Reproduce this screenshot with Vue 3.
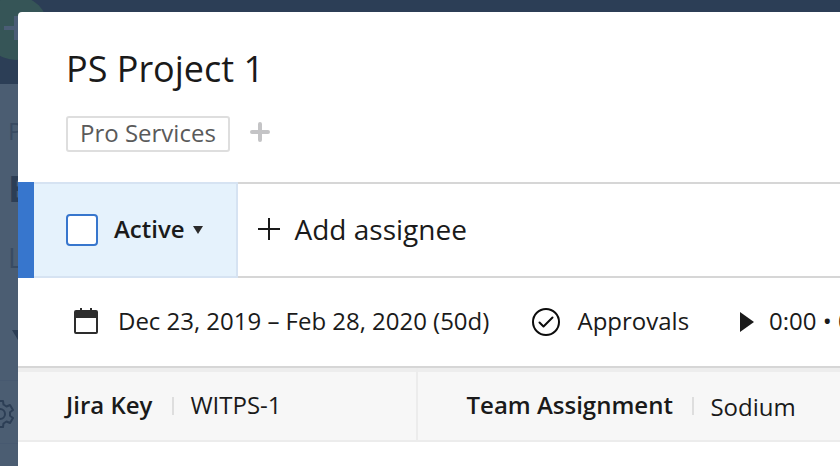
<script setup>
const fields = [
  { label: 'Jira Key', value: 'WITPS-1', kind: 'key' },
  { label: 'Team Assignment', value: 'Sodium', kind: 'team' },
]
</script>

<template>
  <div class="screen">
    <div class="backdrop">
      <div class="topbar">
        <svg class="create" width="64" height="64" viewBox="0 0 64 64">
          <circle cx="32" cy="32" r="32" fill="#365557" />
          <path d="M20 30h24v4H20zM30 20h4v24h-4z" fill="#4b5d76" />
        </svg>
      </div>
      <div class="side">
        <span class="side-small">P</span>
        <span class="side-bold">E</span>
        <span class="side-list">L</span>
        <svg class="side-caret" width="12" height="10" viewBox="0 0 12 10"><path d="M0 0h12L6 10z" fill="#2c3e55" /></svg>
        <div class="side-gear">
          <svg width="30" height="30" viewBox="-15 -15 30 30" fill="none" stroke="#2c3e55" stroke-width="2" stroke-linejoin="round">
            <path d="M-3 -13H3L3.500 -9.500L6.500 -7.500L10 -9L13 -4L10 -1.800V1.800L13 4L10 9L6.500 7.500L3.500 9.500L3 13H-3L-3.500 9.500L-6.500 7.500L-10 9L-13 4L-10 1.800V-1.800L-13 -4L-10 -9L-6.500 -7.500L-3.500 -9.500Z" />
            <circle r="5" />
          </svg>
        </div>
      </div>
    </div>

    <main class="dialog">
      <header class="head">
        <h1 class="title">PS Project 1</h1>
        <div class="tags">
          <span class="tag">Pro Services</span>
          <svg class="tag-add" width="20" height="20" viewBox="0 0 20 20">
            <path d="M10 2v16M2 10h16" stroke="#c4c4c6" stroke-width="4" stroke-linecap="round" />
          </svg>
        </div>
      </header>

      <section class="status-row">
        <div class="accent"></div>
        <div class="status">
          <span class="checkbox"></span>
          <span class="status-name">Active</span>
          <svg class="caret" width="10" height="8" viewBox="0 0 10 8"><path d="M0 0h10L5 8z" fill="#2b2b2b" /></svg>
        </div>
        <div class="assign">
          <svg class="assign-plus" width="22" height="22" viewBox="0 0 22 22"><path d="M11 0v22M0 11h22" stroke="#1a1a1a" stroke-width="2" /></svg>
          <span class="assign-text">Add assignee</span>
        </div>
      </section>

      <section class="meta">
        <svg class="calendar" width="24" height="26" viewBox="0 0 24 26">
          <path d="M6 0h2v2h8V0h2v2h4a2 2 0 0 1 2 2v20a2 2 0 0 1-2 2H2a2 2 0 0 1-2-2V4a2 2 0 0 1 2-2h4zM2 10v14h20V10z" fill="#2d2d2d" fill-rule="evenodd" />
        </svg>
        <span class="dates">Dec 23, 2019 – Feb 28, 2020 (50d)</span>
        <svg class="approve" width="28" height="28" viewBox="0 0 28 28" fill="none" stroke="#0c0c0c" stroke-width="2">
          <circle cx="14" cy="14" r="13" />
          <path d="M7.500 14.500l4 4L20.500 9.500" stroke-linecap="round" stroke-linejoin="round" />
        </svg>
        <span class="approvals">Approvals</span>
        <svg class="play" width="14" height="20" viewBox="0 0 14 20"><path d="M0 0l14 10L0 20z" fill="#1a1a1a" /></svg>
        <span class="timer">0:00 • 0</span>
      </section>

      <section class="fields">
        <div v-for="f in fields" :key="f.kind" class="field" :class="f.kind">
          <span class="label">{{ f.label }}</span>
          <span class="sep"></span>
          <span class="value">{{ f.value }}</span>
        </div>
      </section>
    </main>
  </div>
</template>

<style>
body { overflow: hidden; }
</style>

<style scoped>
.screen {
  position: relative;
  width: 840px;
  height: 466px;
  overflow: hidden;
  font-family: "Open Sans", "Noto Sans", sans-serif;
  font-size: 24px;
  line-height: 32px;
  color: #1a1a1a;
  white-space: nowrap;
}
.backdrop { height: 466px; background: #4b5d72; }
.topbar { height: 84px; background: #2c3e56; overflow: hidden; }
.create { display: block; margin: -4px 0 0 -16px; }
.side { width: 18px; height: 382px; overflow: hidden; display: flex; flex-direction: column; color: #394b62; }
.side-small { margin: 31px 0 0 8px; height: 32px; }
.side-bold { margin: 24px 0 0 8px; height: 36px; font-size: 36px; line-height: 36px; font-weight: 700; color: #2c3e55; }
.side-list { margin: 32px 0 0 8px; height: 36px; font-size: 28px; line-height: 36px; }
.side-caret { flex: none; margin: 55px 0 0 12px; }
.side-gear { flex: none; height: 64px; margin-top: 40px; padding-top: 18px; box-sizing: border-box; border-top: 1px solid #475970; border-bottom: 1px solid #475970; }
.side-gear svg { display: block; margin-left: -15px; }

.dialog {
  position: absolute;
  left: 18px;
  top: 12px;
  width: 822px;
  height: 454px;
  background: #fff;
  border-top-left-radius: 4px;
  overflow: hidden;
}
.head { height: 170px; box-sizing: border-box; padding: 33px 0 0 48px; }
.title { margin: 0; font-size: 36px; line-height: 48px; font-weight: 400; }
.tags { display: flex; align-items: center; gap: 20px; margin-top: 23px; }
.tag {
  width: 164px;
  height: 36px;
  box-sizing: border-box;
  padding-left: 12px;
  border: 2px solid #dedede;
  border-radius: 3px;
  line-height: 30px;
  color: #5a5a5a;
}
.tag-add { margin-top: -4px; }

.status-row { display: flex; height: 96px; }
.accent { width: 16px; background: #3776cd; }
.status {
  display: flex;
  align-items: center;
  width: 204px;
  box-sizing: border-box;
  padding-left: 32px;
  background: #e5f2fc;
  border: 2px solid #d6e3f2;
  border-left: 0;
}
.checkbox { width: 32px; height: 32px; box-sizing: border-box; border: 2px solid #3776cd; border-radius: 4px; background: #fff; }
.status-name { width: 79px; padding: 0 0 2px 16px; font-weight: 600; }
.caret { flex: none; }
.assign { flex: 1; display: flex; align-items: center; padding-left: 20px; border-top: 2px solid #d6d6d6; border-bottom: 2px solid #d6d6d6; }
.assign-plus { margin-top: -2px; }
.assign-text { margin-left: 14.5px; padding-bottom: 2px; font-size: 28px; }

.meta { display: flex; align-items: center; height: 88px; padding-left: 56px; }
.calendar { flex: none; margin-top: -2px; }
.dates { flex: none; width: 398px; padding-bottom: 2px; margin-left: 20px; letter-spacing: -0.02px; }
.approve { flex: none; margin-left: 16px; }
.approvals { flex: none; width: 146.5px; margin-left: 17.5px; padding-bottom: 2px; }
.play { flex: none; margin-left: 16px; }
.timer { margin-left: 15px; padding-bottom: 2px; }

.fields {
  display: flex;
  height: 76px;
  box-sizing: border-box;
  border-top: 2px solid #d6d6d6;
  border-bottom: 2px solid #ececec;
  background: linear-gradient(#ededed 4px, #f7f7f7 4px);
}
.field { display: flex; align-items: center; padding-top: 4px; }
.key { width: 400px; box-sizing: border-box; padding-left: 48px; border-right: 2px solid #ececec; }
.team { padding-left: 48.5px; }
.label { font-weight: 600; padding-bottom: 2px; }
.sep { width: 2px; height: 18px; background: #dedede; margin: 0 16px 0 20px; }
.team .sep { margin-left: 19.5px; }
.value { padding-bottom: 2px; }
.team .value { padding: 2px 0 0; }
</style>
